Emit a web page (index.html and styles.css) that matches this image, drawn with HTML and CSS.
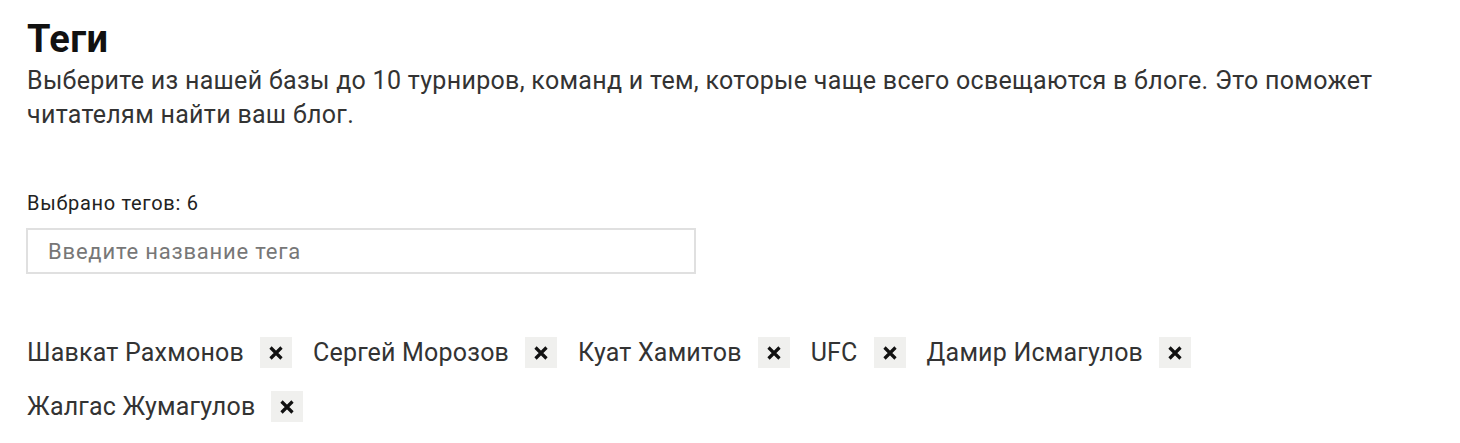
FILE: index.html
```html
<!DOCTYPE html>
<html lang="ru">
<head>
<meta charset="utf-8">
<link rel="stylesheet" href="styles.css">
</head>
<body>
<section class="tags">
  <h1 class="title">Теги</h1>
  <p class="desc">Выберите из нашей базы до 10 турниров, команд и тем, которые чаще всего освещаются в блоге. Это поможет читателям найти ваш блог.</p>
  <div class="count">Выбрано тегов: 6</div>
  <input class="search" type="text" placeholder="Введите название тега">
  <ul class="chips">
    <li class="chip"><span class="chip-text">Шавкат Рахмонов</span><span class="chip-x"><svg viewBox="0 0 16 16" width="16" height="16"><path d="M2.5 2.5L13.5 13.5M13.5 2.5L2.5 13.5" stroke="#111" stroke-width="3.2"/></svg></span></li>
    <li class="chip"><span class="chip-text">Сергей Морозов</span><span class="chip-x"><svg viewBox="0 0 16 16" width="16" height="16"><path d="M2.5 2.5L13.5 13.5M13.5 2.5L2.5 13.5" stroke="#111" stroke-width="3.2"/></svg></span></li>
    <li class="chip"><span class="chip-text">Куат Хамитов</span><span class="chip-x"><svg viewBox="0 0 16 16" width="16" height="16"><path d="M2.5 2.5L13.5 13.5M13.5 2.5L2.5 13.5" stroke="#111" stroke-width="3.2"/></svg></span></li>
    <li class="chip"><span class="chip-text">UFC</span><span class="chip-x"><svg viewBox="0 0 16 16" width="16" height="16"><path d="M2.5 2.5L13.5 13.5M13.5 2.5L2.5 13.5" stroke="#111" stroke-width="3.2"/></svg></span></li>
    <li class="chip"><span class="chip-text">Дамир Исмагулов</span><span class="chip-x"><svg viewBox="0 0 16 16" width="16" height="16"><path d="M2.5 2.5L13.5 13.5M13.5 2.5L2.5 13.5" stroke="#111" stroke-width="3.2"/></svg></span></li>
    <li class="chip"><span class="chip-text">Жалгас Жумагулов</span><span class="chip-x"><svg viewBox="0 0 16 16" width="16" height="16"><path d="M2.5 2.5L13.5 13.5M13.5 2.5L2.5 13.5" stroke="#111" stroke-width="3.2"/></svg></span></li>
  </ul>
</section>
</body>
</html>
```
FILE: styles.css
```css
html, body {
  margin: 0;
  padding: 0;
  background: #fff;
}
body {
  font-family: Roboto, "Noto Sans", sans-serif;
  color: #222;
}
.tags {
  padding: 17px 26px 0 27px;
}
.title {
  margin: 0;
  font-size: 38px;
  font-weight: 700;
  line-height: 44px;
  letter-spacing: 0.4px;
  color: #111;
}
.desc {
  margin: 3px 0 0;
  font-size: 25px;
  line-height: 34px;
  letter-spacing: 0.3px;
  color: #333;
  max-width: 1385px;
}
.count {
  margin-top: 60px;
  font-size: 20px;
  line-height: 22px;
  letter-spacing: 0.7px;
  color: #222;
}
.search {
  display: block;
  box-sizing: border-box;
  margin: 14px 0 0 -1px;
  width: 670px;
  height: 46px;
  border: 2px solid #e0e0e0;
  padding: 0 20px;
  font-family: Roboto, "Noto Sans", sans-serif;
  font-size: 22px;
  letter-spacing: 0.8px;
  color: #222;
  outline: none;
}
.search::placeholder {
  color: #777;
}
.chips {
  list-style: none;
  margin: 63px 0 0;
  padding: 0;
  display: flex;
  flex-wrap: wrap;
  row-gap: 23px;
  column-gap: 21px;
  max-width: 1180px;
}
.chip {
  display: flex;
  align-items: center;
  gap: 16px;
  height: 31px;
}
.chip-text {
  font-size: 25px;
  letter-spacing: 0.2px;
  color: #333;
  line-height: 31px;
}
.chip-x {
  width: 32px;
  height: 31px;
  display: flex;
  align-items: center;
  justify-content: center;
  background: #f0f0ee;
}
.chip-x svg {
  display: block;
}
```
